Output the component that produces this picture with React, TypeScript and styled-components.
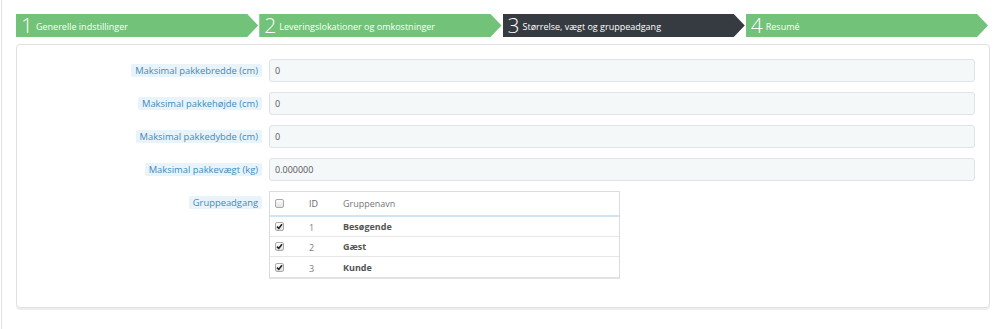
import React from "react";
import styled, { createGlobalStyle } from "styled-components";

const GlobalStyle = createGlobalStyle`
  html, body {
    margin: 0;
    padding: 0;
    background: #fff;
    font-family: "Open Sans", "Liberation Sans", sans-serif;
  }
`;

const Page = styled.div`
  margin-left: 1px;
  min-height: 329px;
  box-sizing: border-box;
  border-left: 1px solid #e3e3e3;
  padding: 14px 10px 0 14px;
`;

const Steps = styled.div`
  display: grid;
  grid-template-columns: repeat(4, 1fr);
  column-gap: 1px;
  width: calc(100% - 2px);
  margin-bottom: 7px;
`;

const Step = styled.div<{ $active?: boolean }>`
  display: flex;
  align-items: center;
  height: 23px;
  padding-left: 5px;
  background: ${(p) => (p.$active ? "#363a41" : "#72c279")};
  color: #fff;
  clip-path: polygon(
    0 0,
    calc(100% - 11px) 0,
    100% 50%,
    calc(100% - 11px) 100%,
    0 100%
  );
  white-space: nowrap;
`;

const StepNumber = styled.span`
  font-size: 21px;
  font-weight: 300;
  line-height: 1;
  margin-right: 3px;
`;

const StepLabel = styled.span`
  font-size: 9px;
  line-height: 1;
  padding-top: 2px;
`;

const Panel = styled.div`
  border: 1px solid #e0e0e0;
  border-radius: 4px;
  box-shadow: 0 2px 0 #eeeeee;
  padding: 14px 14px 29px 0;
  display: grid;
  grid-template-columns: 245px 1fr;
  column-gap: 7px;
  row-gap: 10px;
  height: 264px;
  box-sizing: border-box;
  align-content: start;
`;

const LabelCell = styled.div<{ $top?: boolean }>`
  display: flex;
  justify-content: flex-end;
  align-items: ${(p) => (p.$top ? "flex-start" : "center")};
  padding-top: ${(p) => (p.$top ? "5px" : "0")};
`;

const Label = styled.span`
  background: #e9f4fa;
  color: #3d8bbd;
  font-size: 9.4px;
  line-height: 13px;
  padding: 0 4px;
  border-radius: 2px;
`;

const Input = styled.div`
  height: 23px;
  box-sizing: border-box;
  background: #f5f8f9;
  border: 1px solid #dde3e6;
  border-radius: 3px;
  display: flex;
  align-items: center;
  padding-left: 5px;
  font-size: 9px;
  color: #555;
`;

const Table = styled.div`
  width: 349px;
  border: 1px solid #dcdcdc;
  border-bottom: 2px solid #e2e2e2;
  font-size: 9px;
`;

const Row = styled.div<{ $head?: boolean }>`
  display: grid;
  grid-template-columns: 39px 34px 1fr;
  align-items: center;
  height: ${(p) => (p.$head ? "23px" : "19px")};
  border-bottom: ${(p) => (p.$head ? "2px solid #cfe6f2" : "1px solid #e6e6e6")};
  &:last-child {
    border-bottom: none;
    height: 20px;
  }
`;

const CheckCell = styled.div`
  padding-left: 5px;
  display: flex;
  align-items: center;
`;

const Box = styled.span`
  width: 9px;
  height: 9px;
  box-sizing: border-box;
  border: 1px solid #a9a9a9;
  border-radius: 2px;
  background: linear-gradient(#fdfdfd, #e2e2e2);
  display: flex;
  align-items: center;
  justify-content: center;
`;

const IdCell = styled.div<{ $head?: boolean }>`
  color: ${(p) => (p.$head ? "#666" : "#7d7d7d")};
  padding-top: ${(p) => (p.$head ? "0" : "2px")};
`;

const NameCell = styled.div<{ $head?: boolean }>`
  color: ${(p) => (p.$head ? "#777" : "#555")};
  font-weight: ${(p) => (p.$head ? 400 : 700)};
`;

const Check = () => (
  <svg width="7" height="7" viewBox="0 0 7 7">
    <path d="M1 3.6 L2.8 5.4 L6 1.2" fill="none" stroke="#222" strokeWidth="1.6" />
  </svg>
);

const steps = [
  "Generelle indstillinger",
  "Leveringslokationer og omkostninger",
  "Størrelse, vægt og gruppeadgang",
  "Resumé",
];

const fields = [
  ["Maksimal pakkebredde (cm)", "0"],
  ["Maksimal pakkehøjde (cm)", "0"],
  ["Maksimal pakkedybde (cm)", "0"],
  ["Maksimal pakkevægt (kg)", "0.000000"],
];

const groups = [
  { id: 1, name: "Besøgende" },
  { id: 2, name: "Gæst" },
  { id: 3, name: "Kunde" },
];

export default function App() {
  return (
    <>
      <GlobalStyle />
      <Page>
        <Steps>
          {steps.map((s, i) => (
            <Step key={s} $active={i === 2}>
              <StepNumber>{i + 1}</StepNumber>
              <StepLabel>{s}</StepLabel>
            </Step>
          ))}
        </Steps>
        <Panel>
          {fields.map(([label, value]) => (
            <React.Fragment key={label}>
              <LabelCell>
                <Label>{label}</Label>
              </LabelCell>
              <Input>{value}</Input>
            </React.Fragment>
          ))}
          <LabelCell $top>
            <Label>Gruppeadgang</Label>
          </LabelCell>
          <div>
            <Table>
              <Row $head>
                <CheckCell>
                  <Box />
                </CheckCell>
                <IdCell $head>ID</IdCell>
                <NameCell $head>Gruppenavn</NameCell>
              </Row>
              {groups.map((g) => (
                <Row key={g.id}>
                  <CheckCell>
                    <Box>
                      <Check />
                    </Box>
                  </CheckCell>
                  <IdCell>{g.id}</IdCell>
                  <NameCell>{g.name}</NameCell>
                </Row>
              ))}
            </Table>
          </div>
        </Panel>
      </Page>
    </>
  );
}
